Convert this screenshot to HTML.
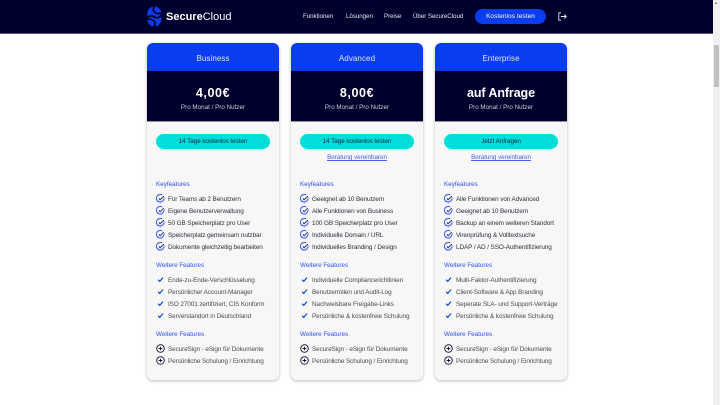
<!DOCTYPE html>
<html lang="de"><head><meta charset="utf-8"><title>SecureCloud</title>
<style>
html,body{margin:0;padding:0;width:720px;height:405px;overflow:hidden;background:#fff;font-family:"Liberation Sans",sans-serif}
*{box-sizing:border-box}
.a{position:absolute;white-space:nowrap}
header{position:absolute;left:0;top:0;width:713px;height:34px;background:#00002e;border-bottom:1px solid #55556e}
.nav{top:12px;height:10px;line-height:10px;font-size:6.2px;color:#e8e8ee;letter-spacing:-.04px}
.sb{position:absolute;left:713px;top:0;width:7px;height:405px;background:#f1f1f1}
.card{position:absolute;top:43px;width:132px;height:337px;background:#f7f7f7;border-radius:6px;box-shadow:0 1px 3px rgba(0,0,0,.28);overflow:hidden}
.h1{position:absolute;left:0;top:0;width:100%;height:28px;background:#0a3cf0;color:#dfe5ff;text-align:center;font-size:8px;line-height:31px;letter-spacing:.08px}
.h2{position:absolute;left:0;top:28px;width:100%;height:51px;background:#00002e;border-bottom:1px solid #8a8aa0;text-align:center;color:#fff}
.price{position:absolute;left:0;width:100%;top:14px;font-size:12.5px;line-height:16px;font-weight:bold;letter-spacing:.6px}
.price.w{letter-spacing:-.1px}
.per{position:absolute;left:0;width:100%;top:32.5px;font-size:6.2px;line-height:8px;color:#d0d0da;letter-spacing:.04px}
.btn{position:absolute;left:9px;top:91px;width:114px;height:15px;border-radius:8px;background:#00dedc;color:#08203a;font-size:6.4px;line-height:16px;text-align:center;letter-spacing:-.08px}
.lnk{position:absolute;left:0;width:100%;top:111px;text-align:center;font-size:6.4px;line-height:8px;color:#4a5fe8;text-decoration:underline;letter-spacing:-.08px}
.t{position:absolute;left:9px;margin-top:1px;font-size:6.3px;line-height:8px;color:#2f4ef2;white-space:nowrap;letter-spacing:0}
.i{position:absolute;left:21px;margin-top:1px;font-size:6.4px;line-height:8px;white-space:nowrap;color:#4a4a55;letter-spacing:-.1px}
.d{color:#2e2e3c}
svg.g{position:absolute;left:8.5px;width:9px;height:9px;margin-top:-.5px}
</style></head><body>
<header>
<svg class="a" style="left:147px;top:6px" width="15" height="21" viewBox="0 0 15 21"><rect x=".3" y=".5" width="14" height="20" rx="7" fill="#0a3cf0"/><g fill="none" stroke="#00002e" stroke-width="1.7"><path d="M8.500 -1C5.500 2 5.500 5 8.500 6.800 10.500 8 12.500 8 15.500 7"/><path d="M-1 12.500C2.500 9.500 5 9 7.300 10.800 9.500 12.500 12.500 12 15.500 8"/><path d="M-1 13.500C2 12.500 4 13 6 14.300 8.800 16 8.800 18.500 6 22"/></g></svg>
<div class="a" style="left:166px;top:9px;height:16px;line-height:16px;font-size:11px;color:#fff;letter-spacing:0"><b>Secure</b>Cloud</div>
<div class="a nav" style="left:303px">Funktionen</div>
<div class="a nav" style="left:346px">Lösungen</div>
<div class="a nav" style="left:384px">Preise</div>
<div class="a nav" style="left:413px">Über SecureCloud</div>
<div class="a" style="left:475px;top:9px;width:71px;height:15px;border-radius:8px;background:#0a3cf0;color:#fff;font-size:6.400px;line-height:15px;text-align:center;letter-spacing:.1px">Kostenlos testen</div>
<svg class="a" style="left:558px;top:12px" width="9" height="9" viewBox="0 0 9 9" fill="none" stroke="#e8e8ee" stroke-width=".9"><path d="M3 .8H.8v7.400H3"/><path d="M2.800 4.500H8.300M6.200 2.500l2.100 2-2.100 2"/></svg>
</header>
<div class="sb"><div style="position:absolute;left:1px;top:45px;width:5px;height:42px;background:#c1c1c1"></div><div style="position:absolute;left:2px;top:2px;width:0;height:0;border-left:1.500px solid transparent;border-right:1.500px solid transparent;border-bottom:2px solid #505050"></div></div>

<svg width="0" height="0" style="position:absolute"><defs>
<symbol id="c" viewBox="0 0 9 9"><path d="M7.900 3.400A3.800 3.800 0 1 1 6.300 1.100" fill="none" stroke="#2a4af0" stroke-width=".9"/><path d="M2.700 4.300l1.500 1.500 3.600-3.800" fill="none" stroke="#1b2a70" stroke-width=".9"/></symbol>
<symbol id="k" viewBox="0 0 9 9"><path d="M2 4.700l1.700 1.700L7 2.600" fill="none" stroke="#0a3cf0" stroke-width="1.100"/></symbol>
<symbol id="p" viewBox="0 0 9 9"><circle cx="4.500" cy="4.500" r="3.800" fill="none" stroke="#15153a" stroke-width=".9"/><path d="M4.500 2.700v3.600M2.700 4.500h3.600" stroke="#15153a" stroke-width=".9"/></symbol>
</defs></svg>

<section class="card" style="left:147px">
<div class="h1">Business</div>
<div class="h2"><div class="price">4,00€</div><div class="per">Pro Monat / Pro Nutzer</div></div>
<div class="btn">14 Tage kostenlos testen</div>
<div class="t" style="top:137px">Keyfeatures</div>
<svg class="g" style="top:151.500px"><use href="#c"/></svg><div class="i d" style="top:152px">Für Teams ab 2 Benutzern</div>
<svg class="g" style="top:163.500px"><use href="#c"/></svg><div class="i d" style="top:164px">Eigene Benutzerverwaltung</div>
<svg class="g" style="top:175.500px"><use href="#c"/></svg><div class="i d" style="top:176px">50 GB Speicherplatz pro User</div>
<svg class="g" style="top:187.500px"><use href="#c"/></svg><div class="i d" style="top:188px">Speicherplatz gemeinsam nutzbar</div>
<svg class="g" style="top:199.500px"><use href="#c"/></svg><div class="i d" style="top:200px">Dokumente gleichzeitig bearbeiten</div>
<div class="t" style="top:218px">Weitere Features</div>
<svg class="g" style="top:232.500px"><use href="#k"/></svg><div class="i" style="top:233px">Ende-zu-Ende-Verschlüsselung</div>
<svg class="g" style="top:244.500px"><use href="#k"/></svg><div class="i" style="top:245px">Persönlicher Account-Manager</div>
<svg class="g" style="top:256.500px"><use href="#k"/></svg><div class="i" style="top:257px">ISO 27001 zertifiziert, CIS Konform</div>
<svg class="g" style="top:268.500px"><use href="#k"/></svg><div class="i" style="top:269px">Serverstandort in Deutschland</div>
<div class="t" style="top:287px">Weitere Features</div>
<svg class="g" style="top:301.500px"><use href="#p"/></svg><div class="i" style="top:302px">SecureSign - eSign für Dokumente</div>
<svg class="g" style="top:313.500px"><use href="#p"/></svg><div class="i" style="top:314px">Persönliche Schulung / Einrichtung</div>
</section>

<section class="card" style="left:291px">
<div class="h1">Advanced</div>
<div class="h2"><div class="price">8,00€</div><div class="per">Pro Monat / Pro Nutzer</div></div>
<div class="btn">14 Tage kostenlos testen</div>
<div class="lnk">Beratung vereinbaren</div>
<div class="t" style="top:137px">Keyfeatures</div>
<svg class="g" style="top:151.500px"><use href="#c"/></svg><div class="i d" style="top:152px">Geeignet ab 10 Benutzern</div>
<svg class="g" style="top:163.500px"><use href="#c"/></svg><div class="i d" style="top:164px">Alle Funktionen von Business</div>
<svg class="g" style="top:175.500px"><use href="#c"/></svg><div class="i d" style="top:176px">100 GB Speicherplatz pro User</div>
<svg class="g" style="top:187.500px"><use href="#c"/></svg><div class="i d" style="top:188px">Individuelle Domain / URL</div>
<svg class="g" style="top:199.500px"><use href="#c"/></svg><div class="i d" style="top:200px">Individuelles Branding / Design</div>
<div class="t" style="top:218px">Weitere Features</div>
<svg class="g" style="top:232.500px"><use href="#k"/></svg><div class="i" style="top:233px">Individuelle Compliancerichtlinien</div>
<svg class="g" style="top:244.500px"><use href="#k"/></svg><div class="i" style="top:245px">Benutzerrollen und Audit-Log</div>
<svg class="g" style="top:256.500px"><use href="#k"/></svg><div class="i" style="top:257px">Nachweisbare Freigabe-Links</div>
<svg class="g" style="top:268.500px"><use href="#k"/></svg><div class="i" style="top:269px">Persönliche &amp; kostenfreie Schulung</div>
<div class="t" style="top:287px">Weitere Features</div>
<svg class="g" style="top:301.500px"><use href="#p"/></svg><div class="i" style="top:302px">SecureSign - eSign für Dokumente</div>
<svg class="g" style="top:313.500px"><use href="#p"/></svg><div class="i" style="top:314px">Persönliche Schulung / Einrichtung</div>
</section>

<section class="card" style="left:435px">
<div class="h1">Enterprise</div>
<div class="h2"><div class="price w">auf Anfrage</div><div class="per">Pro Monat / Pro Nutzer</div></div>
<div class="btn">Jetzt Anfragen</div>
<div class="lnk">Beratung vereinbaren</div>
<div class="t" style="top:137px">Keyfeatures</div>
<svg class="g" style="top:151.500px"><use href="#c"/></svg><div class="i d" style="top:152px">Alle Funktionen von Advanced</div>
<svg class="g" style="top:163.500px"><use href="#c"/></svg><div class="i d" style="top:164px">Geeignet ab 10 Benutzern</div>
<svg class="g" style="top:175.500px"><use href="#c"/></svg><div class="i d" style="top:176px">Backup an einem weiteren Standort</div>
<svg class="g" style="top:187.500px"><use href="#c"/></svg><div class="i d" style="top:188px">Virenprüfung &amp; Volltextsuche</div>
<svg class="g" style="top:199.500px"><use href="#c"/></svg><div class="i d" style="top:200px">LDAP / AD / SSO-Authentifizierung</div>
<div class="t" style="top:218px">Weitere Features</div>
<svg class="g" style="top:232.500px"><use href="#k"/></svg><div class="i" style="top:233px">Multi-Faktor-Authentifizierung</div>
<svg class="g" style="top:244.500px"><use href="#k"/></svg><div class="i" style="top:245px">Client-Software &amp; App Branding</div>
<svg class="g" style="top:256.500px"><use href="#k"/></svg><div class="i" style="top:257px">Seperate SLA- und Support-Verträge</div>
<svg class="g" style="top:268.500px"><use href="#k"/></svg><div class="i" style="top:269px">Persönliche &amp; kostenfreie Schulung</div>
<div class="t" style="top:287px">Weitere Features</div>
<svg class="g" style="top:301.500px"><use href="#p"/></svg><div class="i" style="top:302px">SecureSign - eSign für Dokumente</div>
<svg class="g" style="top:313.500px"><use href="#p"/></svg><div class="i" style="top:314px">Persönliche Schulung / Einrichtung</div>
</section>
</body></html>
